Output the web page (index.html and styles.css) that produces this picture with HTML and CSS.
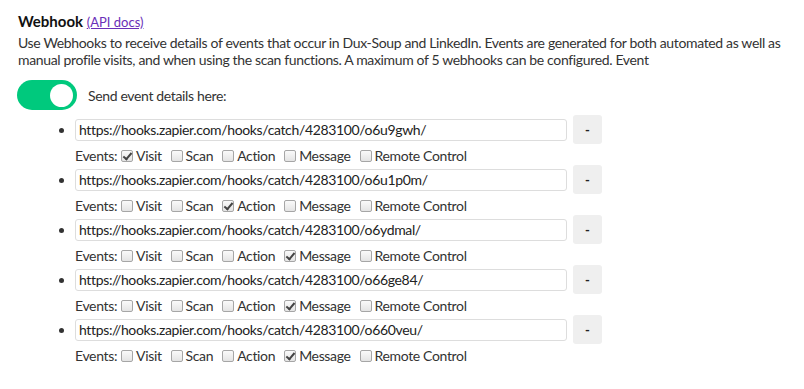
FILE: index.html
```html
<!DOCTYPE html>
<html lang="en">
<head>
  <meta charset="UTF-8" />
  <title>Webhook</title>
  <link rel="stylesheet" href="styles.css">
</head>
<body>
  <section class="webhook">
    <h3 class="title">Webhook <a href="#" class="api-link">(API docs)</a></h3>
    <p class="intro">Use Webhooks to receive details of events that occur in Dux-Soup and LinkedIn. Events are generated for both automated as well as manual profile visits, and when using the scan functions. A maximum of 5 webhooks can be configured. Event</p>

    <div class="toggle-row">
      <label class="switch"><input type="checkbox" checked><span class="slider"></span></label>
      <span class="toggle-label">Send event details here:</span>
    </div>

    <ul class="hook-list">
      <li>
        <div class="hook-row">
          <input class="hook-url" type="text" value="https://hooks.zapier.com/hooks/catch/4283100/o6u9gwh/">
          <button class="remove-button">-</button>
        </div>
        <div class="events">
          <span>Events:</span>
          <label><input type="checkbox" checked>Visit</label>
          <label><input type="checkbox">Scan</label>
          <label><input type="checkbox">Action</label>
          <label><input type="checkbox">Message</label>
          <label><input type="checkbox">Remote Control</label>
        </div>
      </li>
      <li>
        <div class="hook-row">
          <input class="hook-url" type="text" value="https://hooks.zapier.com/hooks/catch/4283100/o6u1p0m/">
          <button class="remove-button">-</button>
        </div>
        <div class="events">
          <span>Events:</span>
          <label><input type="checkbox">Visit</label>
          <label><input type="checkbox">Scan</label>
          <label><input type="checkbox" checked>Action</label>
          <label><input type="checkbox">Message</label>
          <label><input type="checkbox">Remote Control</label>
        </div>
      </li>
      <li>
        <div class="hook-row">
          <input class="hook-url" type="text" value="https://hooks.zapier.com/hooks/catch/4283100/o6ydmal/">
          <button class="remove-button">-</button>
        </div>
        <div class="events">
          <span>Events:</span>
          <label><input type="checkbox">Visit</label>
          <label><input type="checkbox">Scan</label>
          <label><input type="checkbox">Action</label>
          <label><input type="checkbox" checked>Message</label>
          <label><input type="checkbox">Remote Control</label>
        </div>
      </li>
      <li>
        <div class="hook-row">
          <input class="hook-url" type="text" value="https://hooks.zapier.com/hooks/catch/4283100/o66ge84/">
          <button class="remove-button">-</button>
        </div>
        <div class="events">
          <span>Events:</span>
          <label><input type="checkbox">Visit</label>
          <label><input type="checkbox">Scan</label>
          <label><input type="checkbox">Action</label>
          <label><input type="checkbox" checked>Message</label>
          <label><input type="checkbox">Remote Control</label>
        </div>
      </li>
      <li>
        <div class="hook-row">
          <input class="hook-url" type="text" value="https://hooks.zapier.com/hooks/catch/4283100/o660veu/">
          <button class="remove-button">-</button>
        </div>
        <div class="events">
          <span>Events:</span>
          <label><input type="checkbox">Visit</label>
          <label><input type="checkbox">Scan</label>
          <label><input type="checkbox">Action</label>
          <label><input type="checkbox" checked>Message</label>
          <label><input type="checkbox">Remote Control</label>
        </div>
      </li>
    </ul>
  </section>
</body>
</html>
```

FILE: styles.css
```css
body {
  margin: 0;
  background: #fff;
  font-family: Lato, 'Noto Sans', sans-serif;
  font-size: 14px;
  letter-spacing: -0.35px;
  color: #333;
}

.webhook {
  padding: 11px 18px 0 18px;
}

.title {
  margin: 0;
  font-size: 15px;
  font-weight: bold;
  color: #111;
  line-height: 20px;
  letter-spacing: 0;
}

.api-link {
  font-size: 13px;
  font-weight: normal;
  color: #6a2fb8;
}

.intro {
  margin: 2px 0 0 0;
  line-height: 17px;
}

.toggle-row {
  display: flex;
  align-items: center;
  gap: 11px;
  margin-top: 12px;
  margin-left: -1px;
}

.switch {
  position: relative;
  display: inline-block;
  width: 60px;
  height: 30px;
}

.switch input {
  display: none;
}

.slider {
  position: absolute;
  inset: 0;
  background-color: #00c97d;
  border-radius: 15px;
}

.slider:before {
  content: "";
  position: absolute;
  width: 23px;
  height: 23px;
  right: 4px;
  top: 4px;
  background: #fff;
  border-radius: 50%;
}

.hook-list {
  margin: 5px 0 0 0;
  padding-left: 57px;
}

.hook-list li {
  height: 50px;
}

.hook-row {
  display: flex;
  align-items: center;
  gap: 6px;
}

.hook-url {
  width: 492px;
  height: 22px;
  box-sizing: border-box;
  border: 1px solid #ddd;
  border-radius: 3px;
  padding: 0 3px;
  font-family: inherit;
  font-size: 14px;
  letter-spacing: -0.35px;
  color: #222;
}

.remove-button {
  width: 29px;
  height: 29px;
  background: #efefef;
  border: none;
  border-radius: 3px;
  font-family: inherit;
  font-weight: bold;
  font-size: 13px;
  color: #222;
  padding: 0;
}

.events {
  display: flex;
  align-items: center;
  gap: 9px;
  line-height: 18px;
  margin-top: 3px;
}

.events span {
  margin-right: -5px;
}

.events label {
  display: inline-flex;
  align-items: center;
  gap: 3px;
}

.events input {
  appearance: none;
  -webkit-appearance: none;
  position: relative;
  margin: 0;
  width: 12px;
  height: 12px;
  border: 1px solid #a6a6a6;
  border-radius: 2px;
  background: linear-gradient(#fafafa, #e4e4e4);
}

.events input:checked::after {
  content: "";
  position: absolute;
  left: 3px;
  top: 0;
  width: 3px;
  height: 7px;
  border: solid #444;
  border-width: 0 2px 2px 0;
  transform: rotate(40deg);
}
```
